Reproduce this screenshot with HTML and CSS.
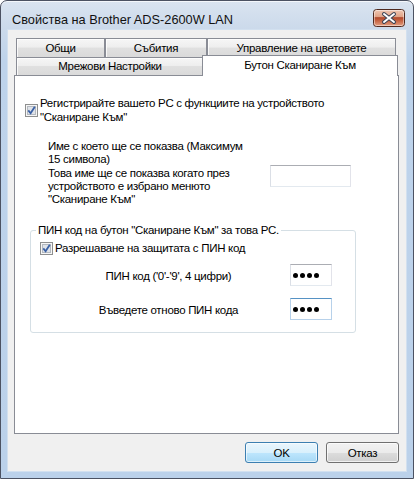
FILE: index.html
```html
<!DOCTYPE html>
<html lang="bg">
<head>
<meta charset="UTF-8" />
<meta name="viewport" content="width=device-width, initial-scale=1.0"/>
<title>Свойства на Brother ADS-2600W LAN</title>
<link rel="stylesheet" href="styles.css">
</head>

<body>

<div class="window">
  <div class="titlebar">
    <span class="title">Свойства на Brother ADS-2600W LAN</span>
    <button class="close" title="Затвори">
      <svg width="32" height="18" viewBox="0 0 32 18">
        <defs>
          <linearGradient id="close-bg" x1="0" y1="0" x2="0" y2="1">
            <stop offset="0" stop-color="#f1c9b5"/>
            <stop offset="0.42" stop-color="#e0a488"/>
            <stop offset="0.48" stop-color="#b14a2d"/>
            <stop offset="0.62" stop-color="#c25d3c"/>
            <stop offset="1" stop-color="#e6a487"/>
          </linearGradient>
        </defs>
        <rect x="0.5" y="0.5" width="31" height="17" rx="3" fill="url(#close-bg)" stroke="#4f2a20"/>
        <rect x="1.5" y="1.5" width="29" height="15" rx="2" fill="none" stroke="rgba(255,255,255,0.45)"/>
        <path d="M11 5 L21 13 M21 5 L11 13" stroke="#3a4254" stroke-width="4" stroke-linecap="round"/>
        <path d="M11 5 L21 13 M21 5 L11 13" stroke="#fff" stroke-width="2" stroke-linecap="round"/>
      </svg>
    </button>
  </div>

  <div class="client">
    <div class="tabs">
      <div class="tab-row top">
        <div class="tab t-general">Общи</div>
        <div class="tab t-events">Събития</div>
        <div class="tab t-color">Управление на цветовете</div>
      </div>
      <div class="tab-row">
        <div class="tab t-network">Мрежови Настройки</div>
        <div class="tab t-scan active">Бутон Сканиране Към</div>
      </div>
    </div>

    <div class="panel">
      <label class="check reg">
        <svg class="box" width="13" height="13" viewBox="0 0 13 13">
          <rect x="0.5" y="0.5" width="12" height="12" fill="#f6f6f6" stroke="#8e8f8f"/>
          <rect x="2.5" y="2.5" width="8" height="8" fill="#dfe3e9" stroke="#b4b9c0"/>
          <path d="M3.3 6.4 L5.6 9.2 L9.8 2.8" fill="none" stroke="#3a61a6" stroke-width="1.8"/>
        </svg>
        <span class="check-text">Регистрирайте вашето PC с функциите на устройството<br>"Сканиране Към"</span>
      </label>

      <div class="name-row">
        <p class="name-text">Име с което ще се показва (Максимум<br>15 символа)<br>Това име ще се показва когато през<br>устройството е избрано менюто<br>"Сканиране Към"</p>
        <div class="textbox name-box"></div>
      </div>

      <fieldset class="group">
        <legend>ПИН код на бутон "Сканиране Към" за това PC.</legend>
        <label class="check pin-check">
          <svg class="box" width="13" height="13" viewBox="0 0 13 13">
            <rect x="0.5" y="0.5" width="12" height="12" fill="#f6f6f6" stroke="#8e8f8f"/>
            <rect x="2.5" y="2.5" width="8" height="8" fill="#dfe3e9" stroke="#b4b9c0"/>
            <path d="M3.3 6.4 L5.6 9.2 L9.8 2.8" fill="none" stroke="#3a61a6" stroke-width="1.8"/>
          </svg>
          <span class="check-text">Разрешаване на защитата с ПИН код</span>
        </label>
        <div class="pin-row">
          <span class="pin-label">ПИН код ('0'-'9', 4 цифри)</span>
          <div class="textbox pin"><span class="dot"></span><span class="dot"></span><span class="dot"></span><span class="dot"></span></div>
        </div>
        <div class="pin-row second">
          <span class="pin-label">Въведете отново ПИН кода</span>
          <div class="textbox pin focused"><span class="dot"></span><span class="dot"></span><span class="dot"></span><span class="dot"></span></div>
        </div>
      </fieldset>
    </div>

    <div class="buttons">
      <button class="btn default">OK</button>
      <button class="btn">Отказ</button>
    </div>
  </div>
</div>

</body>
</html>
```

FILE: styles.css
```css
* {
  box-sizing: border-box;
}

body {
  margin: 0;
  font-family: "Liberation Sans", Arial, sans-serif;
  font-size: 11.5px;
  letter-spacing: -0.3px;
  color: #000;
  background: #fff;
}

.window {
  width: 414px;
  height: 479px;
  border: 1px solid #4c5262;
  border-radius: 7px 7px 0 0;
  background: linear-gradient(180deg, #dae4f0 0, #ccdaeb 26px, #bed3eb 60px, #bbd1ea 100%);
  box-shadow: inset 0 1px 0 rgba(255,255,255,0.7);
  padding: 0 6px 6px;
  display: flex;
  flex-direction: column;
}

.titlebar {
  height: 28px;
  display: flex;
  align-items: flex-start;
  padding: 0 2px 0 5px;
}

.title {
  margin-top: 11px;
  font-size: 12.75px;
  letter-spacing: 0;
  line-height: 16px;
  color: #111;
  flex: 1;
  white-space: nowrap;
}

.close {
  margin-top: 8px;
  padding: 0;
  border: none;
  background: none;
  width: 32px;
  height: 18px;
  display: block;
}

.close svg {
  display: block;
}

.client {
  flex: 1;
  background: #f0f0f0;
  border: 1px solid #d2e0ef;
  padding: 8px 7px 0 6px;
}

/* tabs */
.tab-row {
  display: flex;
  align-items: flex-start;
  padding-left: 2px;
  height: 18px;
}

.tab-row.top {
  height: 19px;
}

.tab {
  height: 18px;
  border: 1px solid #898c95;
  border-bottom: none;
  background: linear-gradient(180deg, #f6f6f6 0, #eeeeee 45%, #e0e0e0 50%, #dadada 100%);
  box-shadow: inset 1px 1px 0 rgba(255,255,255,0.8);
  text-align: center;
  padding-top: 1px;
  line-height: 15px;
  white-space: nowrap;
}

.tab-row.top .tab {
  height: 19px;
  padding-top: 2px;
}

.t-general { width: 89px; }
.t-events { width: 102px; }
.t-color { width: 189px; }
.t-network { width: 188px; }

.t-scan {
  width: 196px;
  margin: -2px -2px -1px;
  height: 21px;
  padding-top: 2px;
  background: #fff;
  box-shadow: none;
  position: relative;
  z-index: 1;
}

.panel {
  height: 359px;
  border: 1px solid #898c95;
  background: #fff;
  padding-top: 20px;
}

/* checkboxes */
.check {
  display: flex;
  align-items: center;
  line-height: 14px;
}

.check .box {
  flex: none;
  display: block;
}

.check-text {
  margin-left: 2px;
}

.reg {
  margin-left: 10px;
}

.name-row {
  display: flex;
  align-items: flex-start;
  margin-top: 16px;
  padding-left: 33px;
}

.name-text {
  margin: 0;
  width: 222px;
  line-height: 13.25px;
}

.textbox {
  background: #fff;
  border: 1px solid;
  border-color: #abadb3 #e2e3ea #e3e9ef #dbdfe6;
}

.name-box {
  width: 81px;
  height: 22px;
  margin-top: 25px;
}

/* pin group */
.group {
  margin: 17px 0 0 15px;
  width: 326px;
  border: 1px solid #d5dfe5;
  border-radius: 3px;
  padding: 4px 0 12px 5px;
  min-width: 0;
}

.group legend {
  padding: 0 2px;
  line-height: 14px;
}

.pin-check {
  margin-left: 4px;
}

.pin-row {
  display: flex;
  align-items: center;
  height: 22px;
  margin-top: 9px;
  padding-left: 12px;
}

.pin-row.second {
  margin-top: 12px;
}

.pin-label {
  width: 241px;
  text-align: center;
  padding-top: 2px;
}

.pin {
  width: 42px;
  height: 22px;
  margin-left: 1px;
  display: flex;
  align-items: center;
  gap: 2px;
  padding-left: 2px;
}

.pin.focused {
  border-color: #5692c4 #b7d1ea #b7d1ea #b7d1ea;
}

.dot {
  width: 5px;
  height: 5px;
  border-radius: 50%;
  background: #000;
}

/* dialog buttons */
.buttons {
  display: flex;
  justify-content: flex-end;
  gap: 8px;
  margin-top: 8px;
}

.btn {
  width: 73px;
  height: 21px;
  padding: 0;
  font-family: inherit;
  font-size: 11.5px;
  letter-spacing: -0.3px;
  color: #000;
  border: 1px solid #707070;
  border-radius: 3px;
  background: linear-gradient(180deg, #f2f2f2 0, #ebebeb 50%, #dddddd 50%, #cfcfcf 100%);
  box-shadow: inset 0 0 0 1px rgba(255,255,255,0.7);
}

.btn.default {
  border-color: #3c7fb1;
  background: linear-gradient(180deg, #eaf6fd 0, #d9f0fc 50%, #bee6fd 50%, #a7d9f5 100%);
  box-shadow: inset 0 0 0 1px rgba(255,255,255,0.6);
}
```
